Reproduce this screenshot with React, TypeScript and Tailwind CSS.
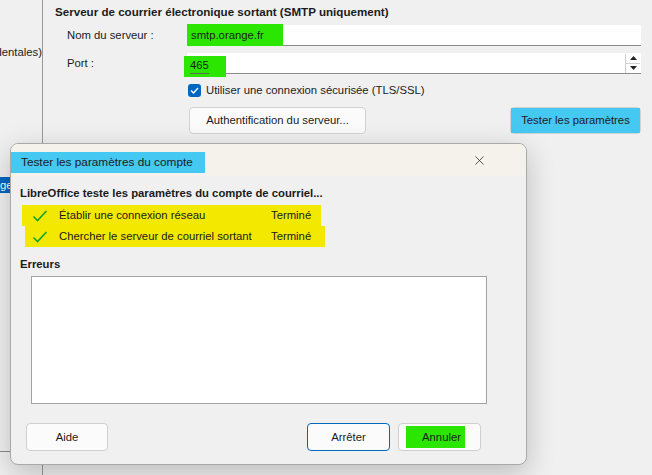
import { X } from "lucide-react";

function Check() {
  return (
    <svg width="16" height="14" viewBox="0 0 16 14" className="shrink-0">
      <path d="M1.5 7.5 L5.5 11.5 L14.5 2" fill="none" stroke="#16a32a" strokeWidth="1.6" />
    </svg>
  );
}

const steps = [
  { label: "Établir une connexion réseau", status: "Terminé", box: "ml-[2px] w-[299px]", icon: "ml-[10px]" },
  { label: "Chercher le serveur de courriel sortant", status: "Terminé", box: "ml-[5px] w-[300px]", icon: "ml-[7px]" },
];

export default function App() {
  return (
    <div className="relative w-[652px] h-[475px] overflow-hidden bg-[#f0f0f0] text-[11.3px] text-[#1b1b1b] font-['Liberation_Sans',Arial,sans-serif]">
      <div className="flex h-full">
        {/* left tree, scrolled */}
        <div className="w-[43px] shrink-0 border-r border-[#9a9a9a]">
          <div className="mt-[44px] h-[17px] flex justify-end overflow-hidden whitespace-nowrap">
            <span className="shrink-0">dentales)</span>
          </div>
          <div className="mt-[116px] h-[16px] bg-[#0067c0] text-white leading-[16px] whitespace-nowrap overflow-hidden">
            ge
          </div>
          <div className="mt-[258px] h-px w-[10px] bg-[#8a8a8a]" />
        </div>

        {/* settings page */}
        <div className="flex-1 pl-[12px] pr-[11px] pt-[4px]">
          <div className="font-bold text-[11.6px] leading-[16px]">
            Serveur de courrier électronique sortant (SMTP uniquement)
          </div>
          <div className="pl-[12px] mt-[5px] grid grid-cols-[120px_1fr] gap-y-[7px] items-center">
            <span>Nom du serveur :</span>
            <div className="relative h-[21px] bg-white border-b border-[#8c8c8c]">
              <span className="absolute left-0 -top-[1px] h-[22px] w-[96px] bg-[#2ae600] pl-[4px] leading-[22px]">
                smtp.orange.fr
              </span>
            </div>
            <span>Port :</span>
            <div className="relative h-[21px] bg-white border-b border-[#8c8c8c] flex justify-end items-center pr-[1px]">
              <span className="absolute -left-[3px] top-[3px] h-[21px] w-[42px] bg-[#2ae600] pl-[6px] leading-[19px]">
                <span className="border-b border-[#666] leading-[16px] inline-block">465</span>
              </span>
              <div className="flex flex-col w-[15px] h-[19px] border-l border-[#d0d0d0]">
                <div className="flex-1 flex items-center justify-center border-b border-[#d0d0d0]">
                  <svg width="7" height="4" viewBox="0 0 7 4"><path d="M0 4 L3.5 0 L7 4Z" fill="#222" /></svg>
                </div>
                <div className="flex-1 flex items-center justify-center">
                  <svg width="7" height="4" viewBox="0 0 7 4"><path d="M0 0 L3.5 4 L7 0Z" fill="#222" /></svg>
                </div>
              </div>
            </div>
          </div>
          <div className="ml-[133px] mt-[8px] flex items-center gap-[5px]">
            <span className="w-[13px] h-[13px] rounded-[3px] bg-[#0067c0] flex items-center justify-center">
              <svg width="9" height="7" viewBox="0 0 9 7"><path d="M1 3.5 L3.5 6 L8 1" fill="none" stroke="white" strokeWidth="1.3" /></svg>
            </span>
            <span>Utiliser une connexion sécurisée (TLS/SSL)</span>
          </div>
          <div className="ml-[134px] mt-[8px] flex justify-between">
            <button className="h-[27px] w-[177px] rounded-[4px] border border-[#d2d2d2] bg-[#fbfbfb]">
              Authentification du serveur...
            </button>
            <button className="h-[27px] w-[131px] rounded-[4px] border border-[#d2d2d2] bg-[#fbfbfb] p-0">
              <span className="block h-full w-[129px] bg-[#45c8f2] leading-[25px]">Tester les paramètres</span>
            </button>
          </div>
        </div>
      </div>

      {/* dialog window */}
      <div className="absolute left-[10px] top-[143px] w-[517px] h-[322px] rounded-[8px] border border-[#a9a9a9] bg-[#f0f0f0] shadow-[0_8px_28px_rgba(0,0,0,0.22)] overflow-hidden flex flex-col">
        <div className="h-[32px] bg-[#f4f2ea] flex items-center justify-between pr-[39px]">
          <div className="self-end mb-[3px] h-[21px] w-[194px] bg-[#45c8f2] pl-[10px] leading-[21px] text-[11.8px]">
            Tester les paramètres du compte
          </div>
          <X size={15} strokeWidth={1.2} className="text-[#222]" />
        </div>
        <div className="flex-1 flex flex-col px-[9px]">
          <div className="mt-[9px] font-bold leading-[16px]">
            LibreOffice teste les paramètres du compte de courriel...
          </div>
          <div className="mt-[4px] flex flex-col">
            {steps.map((s) => (
              <div key={s.label} className={`${s.box} h-[21px] bg-[#f2e800] flex items-center`}>
                <span className={s.icon}><Check /></span>
                <span className="ml-[11px] w-[212px] whitespace-nowrap">{s.label}</span>
                <span>{s.status}</span>
              </div>
            ))}
          </div>
          <div className="mt-[9px] font-bold leading-[16px]">Erreurs</div>
          <div className="mt-[4px] ml-[11px] w-[456px] h-[128px] bg-white border border-[#a3a3a3]" />
          <div className="mt-[19px] flex items-center">
            <button className="ml-[6px] h-[28px] w-[82px] rounded-[4px] border border-[#cfcfcf] bg-[#fbfbfb]">Aide</button>
            <button className="ml-[199px] h-[28px] w-[83px] rounded-[4px] border border-[#0067c0] bg-[#fbfbfb]">Arrêter</button>
            <button className="ml-[8px] h-[28px] w-[83px] rounded-[4px] border border-[#cfcfcf] bg-[#fbfbfb] flex items-center pl-[7px]">
              <span className="h-[22px] w-[59px] bg-[#2ae600] leading-[22px] text-right pr-[4px]">Annuler</span>
            </button>
          </div>
        </div>
      </div>
    </div>
  );
}
